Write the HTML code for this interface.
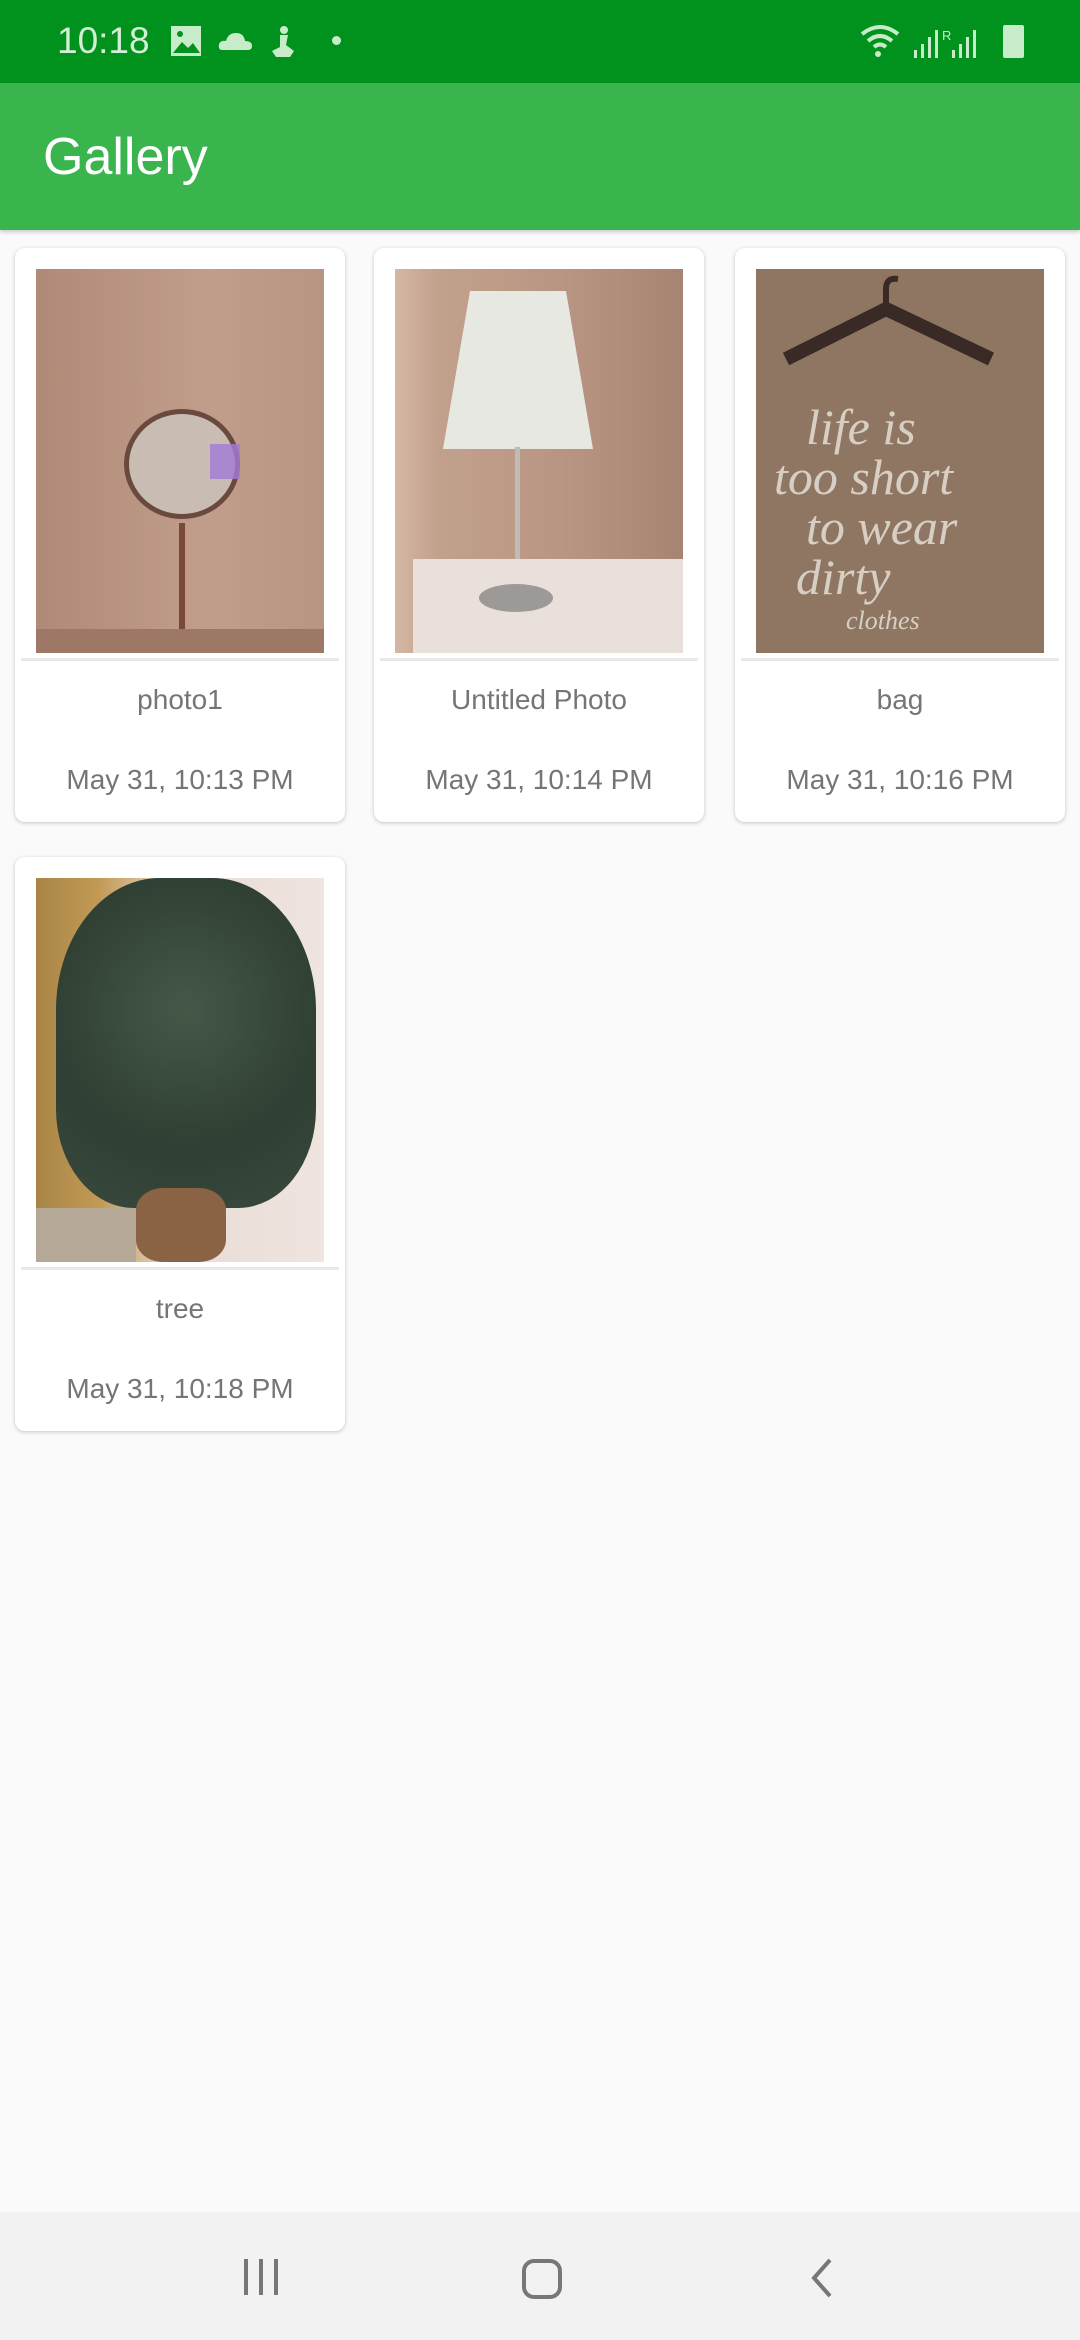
<!DOCTYPE html>
<html><head><meta charset="utf-8"><style>
*{margin:0;padding:0;box-sizing:border-box}
body{width:1080px;height:2340px;background:#fafafa;font-family:"Liberation Sans",sans-serif;position:relative;overflow:hidden}
.sb{position:absolute;left:0;top:0;width:1080px;height:83px;background:#00921c;color:#c8ecc9}
.ab{position:absolute;left:0;top:83px;width:1080px;height:147px;background:#3ab54e;box-shadow:0 2px 4px rgba(0,0,0,.2)}
.ab span{position:absolute;left:43px;top:44px;font-size:52px;color:#fff}
.card{position:absolute;width:330px;height:574px;background:#fff;border-radius:10px;box-shadow:0 1px 4px rgba(0,0,0,.22)}
.img{position:absolute;left:21px;top:21px;width:288px;height:384px;overflow:hidden}
.div{position:absolute;left:6px;right:6px;top:410px;height:3px;background:#e8e9eb}
.t{position:absolute;left:0;right:0;text-align:center;color:#757575;font-size:28px}
.nav{position:absolute;left:0;top:2212px;width:1080px;height:128px;background:#f2f2f2}
</style></head><body>
<div class="sb">
<span style="position:absolute;left:57px;top:20px;font-size:37px;color:#d4efd5">10:18</span>
<svg style="position:absolute;left:170px;top:25px" width="32" height="32"><rect x="1" y="1" width="30" height="30" fill="#c8ecc9"/><path d="M3 28 L12 17 L18 23 L23 18 L30 28Z" fill="#00921c"/><circle cx="10" cy="9" r="3" fill="#00921c"/></svg>
<svg style="position:absolute;left:218px;top:30px" width="36" height="22"><path d="M4 20 Q0 20 1 14 Q3 10 8 11 Q10 3 18 3 Q26 3 27 11 Q34 11 34 16 Q34 20 30 20Z" fill="#c8ecc9"/></svg>
<svg style="position:absolute;left:270px;top:25px" width="28" height="34"><circle cx="14" cy="5" r="4" fill="#c8ecc9"/><path d="M10 10 H18 L16 20 L24 26 L20 32 H6 L2 26 L10 22Z" fill="#c8ecc9"/></svg>
<div style="position:absolute;left:332px;top:36px;width:9px;height:9px;border-radius:50%;background:#c8ecc9"></div>
<svg style="position:absolute;left:860px;top:24px" width="40" height="36"><path d="M2 10 Q20 -4 38 10" stroke="#c8ecc9" stroke-width="4" fill="none"/><path d="M8 17 Q20 7 32 17" stroke="#c8ecc9" stroke-width="4" fill="none"/><path d="M14 23 Q20 18 26 23" stroke="#c8ecc9" stroke-width="4" fill="none"/><circle cx="18" cy="30" r="3" fill="#c8ecc9"/></svg>
<svg style="position:absolute;left:912px;top:28px" width="70" height="32"><rect x="2" y="22" width="3" height="8" fill="#c8ecc9"/><rect x="9" y="16" width="3" height="14" fill="#c8ecc9"/><rect x="16" y="9" width="3" height="21" fill="#c8ecc9"/><rect x="23" y="2" width="3" height="28" fill="#c8ecc9"/><text x="30" y="12" font-size="13" fill="#c8ecc9" font-family="Liberation Sans">R</text><rect x="40" y="22" width="3" height="8" fill="#c8ecc9"/><rect x="47" y="16" width="3" height="14" fill="#c8ecc9"/><rect x="54" y="9" width="3" height="21" fill="#c8ecc9"/><rect x="61" y="2" width="3" height="28" fill="#c8ecc9"/></svg>
<div style="position:absolute;left:1003px;top:25px;width:21px;height:33px;background:#c8ecc9;border-radius:2px"></div>
</div>
<div class="ab"><span>Gallery</span></div>

<div class="card" style="left:15px;top:248px">
<div class="img" style="background:linear-gradient(90deg,#b08a77,#c19d8b 60%,#b89582)">
<div style="position:absolute;left:88px;top:140px;width:116px;height:110px;border-radius:50%;background:#c8bcb3;border:5px solid #6a4a3e"></div>
<div style="position:absolute;left:174px;top:175px;width:30px;height:35px;background:#a27ad8;opacity:.8"></div>
<div style="position:absolute;left:143px;top:254px;width:6px;height:130px;background:#7a4a38"></div>
<div style="position:absolute;left:0;top:360px;width:288px;height:24px;background:#9d7866"></div>
</div><div class="div"></div>
<div class="t" style="top:436px">photo1</div><div class="t" style="top:516px">May 31, 10:13 PM</div></div>

<div class="card" style="left:374px;top:248px">
<div class="img" style="background:linear-gradient(90deg,#d4b7a4 0,#c2a18c 15%,#b89582 60%,#a78471)">
<path></path>
<div style="position:absolute;left:48px;top:22px;width:150px;height:158px;background:#e8e8e3;clip-path:polygon(18% 0,82% 0,100% 100%,0 100%)"></div>
<div style="position:absolute;left:120px;top:178px;width:5px;height:140px;background:#bfbcb6"></div>
<div style="position:absolute;left:18px;top:290px;width:270px;height:94px;background:#e9e0dc"></div>
<div style="position:absolute;left:84px;top:315px;width:74px;height:28px;border-radius:50%;background:#9c9996"></div>
</div><div class="div"></div>
<div class="t" style="top:436px">Untitled Photo</div><div class="t" style="top:516px">May 31, 10:14 PM</div></div>

<div class="card" style="left:735px;top:248px">
<div class="img" style="background:#8f7662">
<svg width="288" height="384" style="position:absolute;left:0;top:0"><path d="M30 90 L130 40 L235 90" stroke="#3a2a26" stroke-width="14" fill="none"/><path d="M130 40 V20 Q130 8 142 10" stroke="#3a2a26" stroke-width="6" fill="none"/>
<g fill="#d8cfc4" font-family="Liberation Serif" font-style="italic" font-size="50"><text x="50" y="175">life is</text><text x="18" y="225">too short</text><text x="50" y="275">to wear</text><text x="40" y="325">dirty</text><text x="90" y="360" font-size="26">clothes</text></g></svg>
</div><div class="div"></div>
<div class="t" style="top:436px">bag</div><div class="t" style="top:516px">May 31, 10:16 PM</div></div>

<div class="card" style="left:15px;top:857px">
<div class="img" style="background:linear-gradient(90deg,#a88546 0,#c29a55 22%,#e8ddd5 50%,#efe4df 100%)">
<div style="position:absolute;left:20px;top:0;width:260px;height:330px;border-radius:40% 40% 30% 30%;background:radial-gradient(circle at 50% 40%,#445848,#2f3f33 60%,#3a4a3e)"></div>
<div style="position:absolute;left:100px;top:310px;width:90px;height:74px;border-radius:30%;background:#8a6244"></div>
<div style="position:absolute;left:0;top:330px;width:100px;height:54px;background:#b5a896"></div>
</div><div class="div"></div>
<div class="t" style="top:436px">tree</div><div class="t" style="top:516px">May 31, 10:18 PM</div></div>

<div class="nav">
<svg style="position:absolute;left:242px;top:45px" width="40" height="40"><rect x="2" y="2" width="4" height="36" fill="#777"/><rect x="17" y="2" width="4" height="36" fill="#777"/><rect x="32" y="2" width="4" height="36" fill="#777"/></svg>
<div style="position:absolute;left:522px;top:47px;width:40px;height:40px;border:4px solid #777;border-radius:12px"></div>
<svg style="position:absolute;left:808px;top:45px" width="30" height="42"><path d="M22 3 L6 21 L22 39" stroke="#777" stroke-width="4" fill="none"/></svg>
</div>
</body></html>
